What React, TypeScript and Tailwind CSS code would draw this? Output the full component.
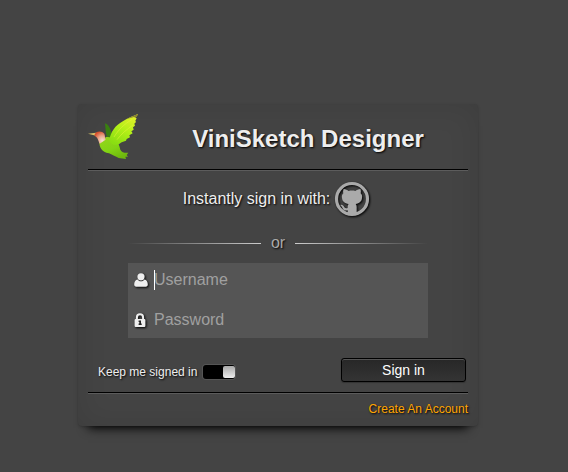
import { useState } from "react";

const textShadow = "[text-shadow:1px_1px_2px_#000]";
const iconShadow = "drop-shadow-[1px_1px_1px_#000]";

function BirdLogo() {
  return (
    <svg viewBox="12 8 150 141" className="h-[47px] w-[50px] shrink-0" role="img" aria-label="ViniSketch">
      <defs>
        <linearGradient id="wing" x1="0.8" y1="0" x2="0.3" y2="1">
          <stop offset="0" stopColor="#e6ef2c" />
          <stop offset="0.5" stopColor="#b4f018" />
          <stop offset="1" stopColor="#8ade12" />
        </linearGradient>
        <linearGradient id="body" x1="0" y1="0" x2="0.6" y2="1">
          <stop offset="0" stopColor="#98d51c" />
          <stop offset="0.6" stopColor="#83d414" />
          <stop offset="1" stopColor="#6fb80e" />
        </linearGradient>
        <radialGradient id="throat" cx="0.7" cy="0.75" r="0.8">
          <stop offset="0" stopColor="#f5e3d2" />
          <stop offset="0.5" stopColor="#e9a78b" />
          <stop offset="1" stopColor="#d8502c" />
        </radialGradient>
      </defs>
      <path d="M63 39C73 42 80 54 83 72L81 86L68 77C64 64 65 52 63 39Z" fill="#39800f" />
      <path d="M46 92C45 110 53 125 75 129C87 134 94 139 104 143L126 146L124 139L132 139L128 134L133 127C122 128 113 126 109 118C106 105 101 90 88 83L68 79Z" fill="url(#body)" />
      <path d="M75 91C82 62 91 47 119 31C132 23 148 17 162 11C160 16 156 20 154 22L158 24L154 31L156 35L151 40L153 46L147 51L149 58L142 63L146 69L136 75L138 81L128 86L126 91L113 96L102 103C91 105 81 101 75 91Z" fill="url(#wing)" />
      <path d="M128 26C141 20 152 15 162 11C160 16 156 20 154 22L150 20Z" fill="#8a8433" />
      <path d="M90 80C103 59 119 42 145 27M99 88C112 70 128 58 147 44" fill="none" stroke="#e9f63b" strokeWidth="3" opacity="0.5" />
      <path d="M12 70L36 67L36 76Z" fill="#dac369" />
      <path d="M32 71C38 62 53 61 61 70C64 77 62 82 65 88L47 100C43 92 43 83 32 76Z" fill="url(#throat)" />
    </svg>
  );
}

function GithubIcon() {
  return (
    <svg viewBox="-3 -3 108 108" className={`size-9 ${iconShadow}`} aria-hidden="true">
      <circle cx="51" cy="51" r="46.5" fill="none" stroke="#aaa" strokeWidth="9.5" />
      <path
        fill="#aaa"
        d="M26 21C32 21 37 24 41 27C47 25 55 25 61 27C65 24 70 21 76 21C78 26 78 30 77 34C81 38 82 42 81 48C80 59 73 64 62 66C64 68 65 71 65 75L65 94L38 94L38 85C28 88 24 82 22 77C20 73 17 71 16 69C22 67 26 72 28 76C31 80 35 79 38 78C38 73 38 69 41 66C29 64 22 59 21 48C20 42 21 38 25 34C24 30 24 26 26 21Z"
      />
    </svg>
  );
}

function UserIcon() {
  return (
    <svg viewBox="0 0 14 14" className={`size-[14px] ${iconShadow}`} fill="#eee" aria-hidden="true">
      <circle cx="7" cy="3.8" r="3.6" />
      <path d="M3.6 6.4C4.5 7.7 5.7 8.2 7 8.2s2.5-.5 3.4-1.8C12.7 6.6 13.8 9 13.8 11.6c0 1.3-.8 2.2-2 2.2H2.2c-1.2 0-2-.9-2-2.2C.2 9 1.3 6.6 3.6 6.4Z" />
    </svg>
  );
}

function LockIcon() {
  return (
    <svg viewBox="0 0 14 14" className={`size-[14px] ${iconShadow}`} aria-hidden="true">
      <path d="M2.9 7V4.4a3.1 3.1 0 0 1 6.2 0V7" fill="none" stroke="#eee" strokeWidth="2" />
      <rect x="0.6" y="6" width="10.8" height="8" rx="1" fill="#eee" />
      <path d="M4.6 7.6h2.4v3h.7v1.4H4.6v-1.4h.7V9h-.7Z" fill="#222" />
    </svg>
  );
}

function Divider() {
  return <hr className="border-t border-b border-t-black border-b-[#5c5c5c]" />;
}

export default function App() {
  const [keep, setKeep] = useState(true);

  return (
    <main className="flex min-h-screen justify-center bg-[#444] pt-[104px] pr-3 font-['Liberation_Sans',Arial,sans-serif] text-[#eee]">
      <form
        onSubmit={(e) => e.preventDefault()}
        className="w-full max-w-[400px] self-start rounded px-[10px] shadow-[0_1px_3px_rgba(0,0,0,0.2),0_12px_10px_-10px_#000,inset_0_0_30px_rgba(0,0,0,0.1)] bg-[#444]"
      >
        <header className="flex h-[65px] items-center gap-[10px]">
          <BirdLogo />
          <h1 className={`flex-1 pt-1 text-center text-2xl font-bold ${textShadow}`}>ViniSketch Designer</h1>
        </header>
        <Divider />

        <div className="flex h-14 items-center justify-center gap-1 pr-[3px] pb-px">
          <span className={`text-base ${textShadow}`}>Instantly sign in with:</span>
          <button type="button" aria-label="Sign in with GitHub">
            <GithubIcon />
          </button>
        </div>

        <div className="mx-10 mb-1 flex h-8 items-center gap-[10px]">
          <span className="h-px flex-1 bg-linear-to-r from-transparent to-[#ccc]" />
          <span className={`text-base leading-4 text-[#aaa] ${textShadow}`}>or</span>
          <span className="h-px flex-1 bg-linear-to-l from-transparent to-[#ccc]" />
        </div>

        <div className="mx-10 flex flex-col gap-[5px] bg-[#555]">
          <div className="relative flex h-[35px] items-center gap-[6px] pb-[2px] pl-[6px]">
            <label htmlFor="username">
              <UserIcon />
            </label>
            <span className="absolute left-[26px] h-5 w-px bg-white" />
            <input
              id="username"
              aria-label="Username"
              placeholder="Username"
              className="min-w-0 flex-1 bg-transparent text-base outline-none placeholder:text-[#a0a0a0]"
            />
          </div>
          <div className="flex h-[35px] items-center gap-[6px] pb-[2px] pl-[6px]">
            <label htmlFor="password">
              <LockIcon />
            </label>
            <input
              id="password"
              type="password"
              aria-label="Password"
              placeholder="Password"
              className="min-w-0 flex-1 bg-transparent text-base outline-none placeholder:text-[#a0a0a0]"
            />
          </div>
        </div>

        <div className="mt-5 mb-[10px] flex items-center justify-between pr-[2px] pl-[10px]">
          <label className={`flex items-center gap-[6px] pt-1 text-xs ${textShadow}`}>
            Keep me signed in
            <input
              type="checkbox"
              checked={keep}
              onChange={(e) => setKeep(e.target.checked)}
              className="peer sr-only"
            />
            <span className="flex h-[14px] w-8 justify-start rounded-[3px] bg-black shadow-[0_0_0_1px_#555] peer-checked:justify-end">
              <span className="h-3 w-3 self-center rounded-[2px] bg-linear-to-b from-[#aaa] to-[#eee]" />
            </span>
          </label>
          <button
            type="submit"
            className="h-6 w-[125px] rounded-[3px] border border-black bg-linear-to-b from-[#272727] to-[#343434] text-sm leading-5 text-white shadow-[0_1px_1px_#333,inset_0_1px_0_#555]"
          >
            Sign in
          </button>
        </div>
        <Divider />

        <footer className="flex h-8 items-center justify-end pb-[2px]">
          <a href="#create" className={`text-xs text-[#ffa500] ${textShadow}`}>
            Create An Account
          </a>
        </footer>
      </form>
    </main>
  );
}
